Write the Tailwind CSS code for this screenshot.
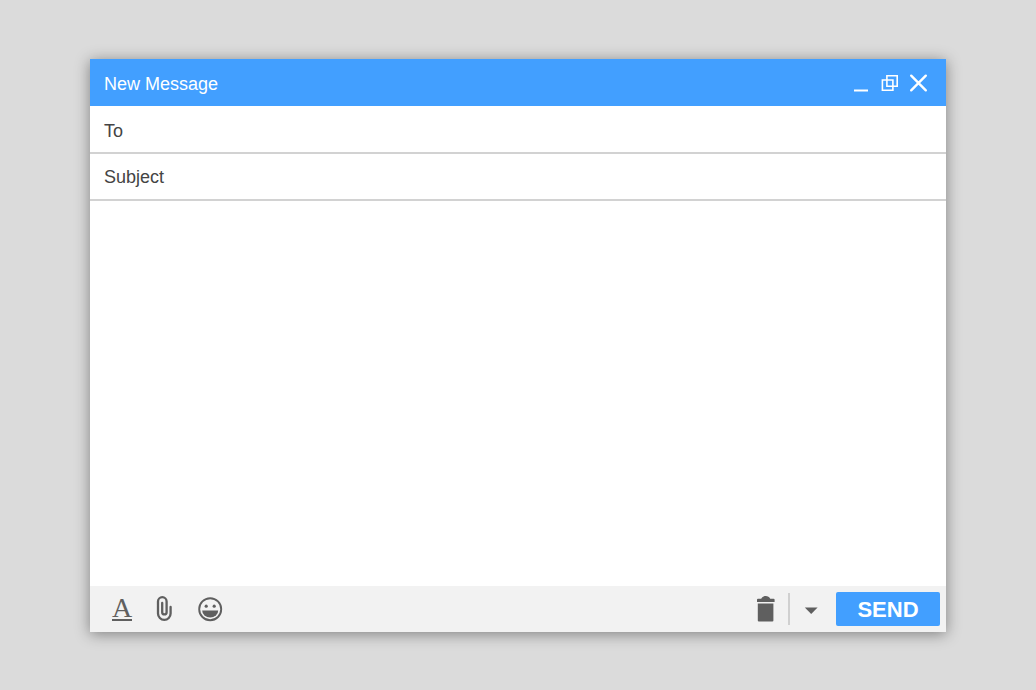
<!DOCTYPE html>
<html lang="en">
  <head>
    <meta charset="UTF-8" />
    <meta name="viewport" content="width=device-width, initial-scale=1.0" />
    <title>New Message</title>
    <script src="https://cdn.jsdelivr.net/npm/@tailwindcss/browser@4"></script>
  </head>
  <body
    class="min-h-screen flex flex-col bg-[#dbdbdb] px-[90px] pt-[59px] pb-[58px] font-['Liberation_Sans',Arial,sans-serif] text-[18px] text-[#444]"
  >
    <form
      class="grow flex flex-col bg-white shadow-[0_2px_14px_rgba(0,0,0,0.42)]"
    >
      <header
        class="flex items-center justify-between h-[47px] pl-3.5 pr-[18px] bg-[#429fff] text-white"
      >
        <h1 class="pt-1">New Message</h1>
        <div class="flex items-center gap-2">
          <button type="button" aria-label="Minimize" class="cursor-pointer">
            <svg class="w-5 h-5" viewBox="0 0 20 20" fill="none">
              <path d="M2 17.5H16" stroke="currentColor" stroke-width="2" />
            </svg>
          </button>
          <button type="button" aria-label="Restore" class="cursor-pointer">
            <svg
              class="w-5 h-5"
              viewBox="0 0 20 20"
              fill="none"
              stroke="currentColor"
              stroke-width="1.6"
            >
              <path d="M6.9 2.8H17.2V13.2H6.9Z" />
              <path d="M2.4 7H12.9V17.2H2.4Z" />
            </svg>
          </button>
          <button type="button" aria-label="Close" class="cursor-pointer">
            <svg class="w-5 h-5" viewBox="0 0 20 20" fill="none">
              <path
                d="M3.2 2.7L17.8 17.3M17.8 2.7L3.2 17.3"
                stroke="currentColor"
                stroke-width="2.4"
                stroke-linecap="round"
              />
            </svg>
          </button>
        </div>
      </header>

      <div
        class="flex items-center h-12 px-3.5 pt-1 border-b-2 border-[#d2d2d2]"
      >
        <label for="to">To</label>
        <input id="to" type="text" class="grow ml-2 outline-none" />
      </div>
      <div
        class="flex items-center h-[47px] px-3.5 pt-0.5 border-b-2 border-[#d2d2d2]"
      >
        <label for="subject">Subject</label>
        <input id="subject" type="text" class="grow ml-2 outline-none" />
      </div>
      <textarea
        aria-label="Message"
        class="grow block w-full p-3.5 resize-none outline-none"
      ></textarea>

      <footer
        class="flex items-center justify-between h-[46px] pl-5 pr-1.5 bg-[#f2f2f2] text-[#5f5f5f]"
      >
        <div class="flex items-center gap-4">
          <button
            type="button"
            aria-label="Text formatting"
            class="w-6 flex justify-center cursor-pointer"
          >
            <span
              class="h-6 border-b-2 border-current font-['Liberation_Serif',serif] text-[28px] leading-[22px]"
              >A</span
            >
          </button>
          <button
            type="button"
            aria-label="Attach file"
            class="w-7 flex justify-center cursor-pointer"
          >
            <svg class="w-4 h-[26px]" viewBox="0 0 16 26" fill="none">
              <path
                d="M14.6 11V17.5A6.3 6.3 0 0 1 2 17.5V5.5A4.3 4.3 0 0 1 10.6 5.5V16.2A2.2 2.2 0 0 1 6.2 16.2V7"
                stroke="currentColor"
                stroke-width="2.3"
                stroke-linecap="round"
              />
            </svg>
          </button>
          <button
            type="button"
            aria-label="Insert emoji"
            class="w-8 flex justify-center cursor-pointer"
          >
            <svg class="w-[26px] h-[26px]" viewBox="0 0 26 26" fill="none">
              <circle
                cx="13.2"
                cy="13.2"
                r="11"
                stroke="currentColor"
                stroke-width="1.9"
              />
              <circle cx="9.2" cy="10.2" r="1.6" fill="currentColor" />
              <circle cx="17.2" cy="10.2" r="1.6" fill="currentColor" />
              <path d="M5.2 14.4H21.2A8 7.2 0 0 1 5.2 14.4Z" fill="currentColor" />
            </svg>
          </button>
        </div>

        <div class="flex items-center">
          <button type="button" aria-label="Discard" class="cursor-pointer">
            <svg class="w-5 h-[26px]" viewBox="0 0 20 26" fill="currentColor">
              <path
                d="M2 2.8H5.2C6 1 7.6 0 9.7 0S13.4 1 14.2 2.8H17.6Q18.6 2.8 18.6 3.8V6H1V3.8Q1 2.8 2 2.8Z"
              />
              <path d="M1.8 7.4H17.4V24.4Q17.4 25.4 16.4 25.4H2.8Q1.8 25.4 1.8 24.4Z" />
            </svg>
          </button>
          <span class="w-0.5 h-8 ml-3 bg-[#d0d0d0]"></span>
          <button
            type="button"
            aria-label="More options"
            class="ml-3.5 mr-4 cursor-pointer"
          >
            <svg class="w-4 h-4" viewBox="0 0 16 16" fill="currentColor">
              <path d="M.8 6.4H13.6L7.2 13Z" />
            </svg>
          </button>
          <button
            type="submit"
            class="w-[104px] h-[34px] rounded-xs bg-[#429fff] text-white text-[22px] font-bold cursor-pointer"
          >
            SEND
          </button>
        </div>
      </footer>
    </form>
  </body>
</html>
